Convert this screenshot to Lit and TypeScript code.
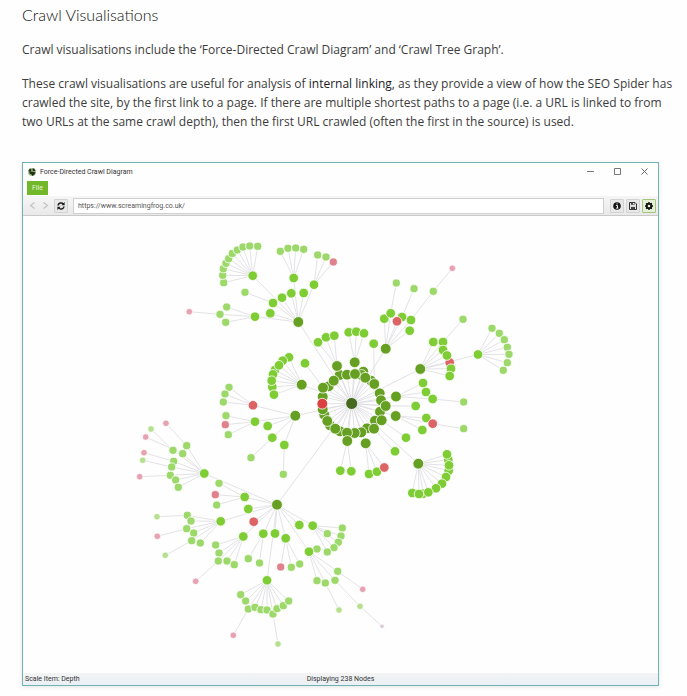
import { LitElement, html, svg, css } from "lit";
import { customElement } from "lit/decorators.js";

interface GraphNode {
  x: number;
  y: number;
  broken: boolean;
  children: GraphNode[];
}

const n = (x: number, y: number, ...children: GraphNode[]): GraphNode => ({ x, y, broken: false, children });
const r = (x: number, y: number, ...children: GraphNode[]): GraphNode => ({ x, y, broken: true, children });
const fan = (...points: [number, number][]): GraphNode[] => points.map(([x, y]) => n(x, y));

const site: GraphNode = n(351.7, 403.5,
  // Ring of pages linked straight from the home page
  ...fan([339.7, 375], [347, 374.7], [363.3, 371.7], [371, 380.7], [379.7, 393.3], [361.5, 375],
    [385.7, 406], [380, 411.7], [367, 428.3], [361.3, 432.3], [354.7, 433], [340, 431.3], [330, 425.3],
    [324.3, 414.7], [322.7, 409.3], [322.7, 396.7], [328.7, 386.3]),
  ...fan([355, 374], [365.3, 377.7], [381, 400.3], [375, 420.7], [347, 432.7], [335.3, 428.7], [327.3, 421], [333.7, 380.7]),
  n(374.3, 384, n(373.7, 343.7)),
  n(323, 387.7, n(305, 363.3)),
  n(374, 428.7, n(395, 451.3)),
  n(381.7, 420.3, n(406, 437.7)),
  n(385.7, 406, n(415.7, 406)),
  r(322.3, 403.7),
  n(337, 366, ...fan([318, 342.3], [326, 337.3], [334.3, 335.7])),
  n(354.7, 362.3, ...fan([348.7, 332.3], [356.3, 331.7], [364, 333.3])),
  n(347.3, 441, ...fan([340.3, 470.7], [351.3, 471.3])),
  n(365.7, 443.3, n(369, 474), n(377, 471.7), r(384.3, 467.5)),
  n(396, 396.5, n(423, 383), n(426, 392), n(432.7, 399, n(463.7, 402))),
  n(395.7, 416, n(426.3, 418), n(422.3, 430), r(432.7, 423.7, n(463.7, 428.7))),
  n(418.3, 463.7, ...fan([448.3, 459.7], [448.7, 470.7], [423.3, 493.7], [447, 454.3], [449, 465.3], [446, 477],
    [442, 483.7], [436, 488.3], [428.3, 492.3], [412.3, 493], [419, 494])),
  n(298.3, 322,
    n(252.7, 275.7, ...fan([223.7, 282.7], [222.7, 275.3], [223.3, 268.7], [226, 263.3], [228.7, 258.7],
      [232.3, 253.5], [237.3, 250], [243, 247], [249.7, 246], [257.7, 246.3])),
    n(293.7, 278, ...fan([280.3, 251.3], [288, 248.3], [295.7, 248], [303.7, 249.3])),
    n(314, 284.7, n(317.7, 255), n(326, 257), r(333.3, 262)),
    n(303.7, 293), n(291.3, 293.3), n(282, 297.7), n(273, 303, n(245, 292.3)), n(270.3, 313.3),
    n(255, 316.7, n(226.7, 307), n(220, 314.3, r(189.3, 311.7)), n(225.7, 322.3))),
  n(385.7, 348.7,
    n(384.3, 318.7), n(390.7, 313.3, n(396.3, 283)), n(402, 317, n(414, 288.7)), r(397, 321.3),
    n(411, 320, n(433.3, 291.3, r(452.3, 268.3))), n(409.7, 330.7)),
  n(420.3, 369,
    n(433.3, 342), n(443, 342, n(463, 319.3)), r(449.7, 362.5), n(443, 350), n(447, 355.5), n(451, 368.7), n(449.7, 376),
    n(478, 354.5, ...fan([492, 328.3], [499.3, 333.3], [504.3, 339.7], [507.3, 347.3], [509, 354.3], [507.3, 362.7], [503.3, 370.3]))),
  n(301.7, 384.7, ...fan([289, 357.3], [282.7, 360.7], [275, 370], [273, 374.3], [279, 365.3], [272.3, 387], [271.7, 380.7], [274, 394.7])),
  n(295.3, 415.7,
    r(253, 405.3, ...fan([229, 387.3], [225, 394], [223.3, 402])),
    n(255, 421.7, n(226, 415.7), r(225.3, 424.7), n(228.3, 434.7)),
    n(267.7, 426), n(272.3, 437.7, n(251, 457.7)), n(284.3, 445, n(283.3, 474.3))),
  n(277, 504.7,
    n(204.3, 473.5,
      n(186.7, 445.7, r(166, 423.3)), n(182.7, 453.7, r(145.7, 437)), n(173, 450.3, n(151, 429)),
      n(173.7, 461.3, r(144, 452.7)), n(171.7, 467, n(142.7, 460.3)), n(170.3, 475.3, r(139.7, 476.7)),
      n(175.7, 480), n(178.3, 487.3)),
    n(244.7, 497, n(219, 483.3), r(215.3, 494.7), n(216.7, 505)),
    n(248.3, 509), r(253.7, 521.7),
    n(220.7, 521.3,
      n(187.3, 515.3, n(157, 516.7)), n(191, 521), n(186.7, 528.7, r(157.3, 536.3)), n(193.7, 533),
      n(191.7, 540.7, n(165.3, 555.3)), n(200.3, 543)),
    n(243.3, 536.5, n(215.7, 545), n(219, 553), n(218.3, 561, r(195.7, 581.3)), n(227, 561), n(234.3, 564.7)),
    n(263.3, 533.7, n(248.3, 558.7), n(259.5, 563)),
    n(275, 533.5),
    n(285.7, 538.3, r(280.7, 567), n(291.3, 567.3), n(299.7, 564)),
    n(267, 580.3,
      n(240.7, 594.7), n(245.7, 601), n(248.3, 609, r(233.3, 635.3)), n(255, 607.3), n(261, 609.7), n(267, 610),
      n(273, 614, n(278, 644)), n(277, 608.7), n(283.3, 605.7), n(288.7, 601)),
    n(299.3, 525),
    n(312.7, 525.7, ...fan([342.3, 528], [327.3, 533.7], [341, 536], [338.3, 542.3], [334, 547.7], [327.3, 552])),
    n(309, 551.7,
      n(317, 549), n(317, 580.7), n(325.3, 583, n(339, 610)), n(335, 580.3, n(360, 606.3, r(382, 626.3))),
      n(337.7, 571.3, r(362.7, 589.3)))));

const RADIUS = [6, 5.4, 4.8, 4.1, 3.3, 2.3];

@customElement("crawl-graph")
export class CrawlGraph extends LitElement {
  static styles = css`
    :host { display: block; background: #fefefe; }
    svg { display: block; width: 100%; height: auto; }
    line { stroke: #dcdae0; stroke-width: 0.8; }
    circle { stroke: #fff; stroke-width: 0.8; }
    .d0 { fill: #456a20; }
    .d1 { fill: #66a023; }
    .d2 { fill: #7fcd35; }
    .d3 { fill: #9dd96a; }
    .d4 { fill: #b6df90; }
    .d5 { fill: #c8dcb8; }
    .broken.d1 { fill: #db4140; }
    .broken.d2 { fill: #dc6464; }
    .broken.d3 { fill: #e0828c; }
    .broken.d4 { fill: #e6a2b0; }
    .broken.d5 { fill: #d9cbd6; }
  `;

  private links(node: GraphNode): unknown {
    return node.children.map((c) => svg`<line x1=${node.x} y1=${node.y} x2=${c.x} y2=${c.y}></line>${this.links(c)}`);
  }

  private dots(node: GraphNode, depth = 0): unknown {
    return svg`${node.children.map((c) => this.dots(c, depth + 1))}
      <circle class="d${depth} ${node.broken ? "broken" : ""}" cx=${node.x} cy=${node.y} r=${RADIUS[depth]}></circle>`;
  }

  render() {
    return html`<svg viewBox="23 216 635 457" role="img" aria-label="Force-directed crawl diagram">
      ${this.links(site)}${this.dots(site)}
    </svg>`;
  }
}

@customElement("crawl-window")
export class CrawlWindow extends LitElement {
  static styles = css`
    :host {
      display: block;
      border: 1px solid #6fb3b4;
      background: #fefefe;
      box-shadow: 0 1px 4px #0000001c;
      font: 7px/10px Roboto, "Open Sans", sans-serif;
      color: #333;
    }
    button { margin: 0; padding: 0; border: 0; background: none; font: inherit; color: inherit; display: grid; place-items: center; }
    svg { display: block; }
    .title { display: flex; align-items: center; height: 17px; padding: 0 8px 0 4px; gap: 3px; }
    .title .name { flex: 1; }
    .controls { display: flex; gap: 16px; }
    .controls button { width: 11px; height: 11px; }
    .menu { padding: 1px 4px; height: 14px; }
    .file { width: 21px; height: 14px; background: #73b72b; color: #e6f6d2; }
    .bar { display: flex; align-items: center; gap: 2px; height: 19px; padding: 0 2px 0 4px; border-bottom: 1px solid #c9c9c9; background: linear-gradient(#f6f6f6, #e9e9e9); }
    .nav { width: 11px; height: 13px; }
    .tool { width: 14px; height: 14px; box-sizing: border-box; border: 1px solid #d2d2d2; border-radius: 1px; background: #e8e8e8; }
    .reload { margin: 0 3px 0 1px; }
    .settings { border-color: #a5c47c; background: #e6efd9; }
    input { flex: 1; min-width: 0; height: 16px; box-sizing: border-box; border: 1px solid #d0d0d0; padding: 0 4px; margin: 0 4px 0 0; font: inherit; color: #555; background: #fff; outline: 0; }
    .status { display: grid; grid-template-columns: 1fr auto 1fr; height: 12px; align-items: center; padding: 0 2px; background: linear-gradient(#f3f3f3, #eaf0f5); }
  `;

  render() {
    return html`
      <div class="title">
        <svg width="10" height="10" viewBox="0 0 10 10">
          <circle cx="5" cy="5" r="4" fill="#a5c48a"></circle>
          <path d="M1.5 3.5L3 1.5l1.5 1L4 4.5 2.5 5zM5.5 1.5h1.5l1.5 2L7 4.5 5.5 3.5zM4.5 4.5L7 5l1.5.5-1 2-2 1.5-1-1.5L3 7l-1-1.5z" fill="#20301c"></path>
        </svg>
        <span class="name">Force-Directed Crawl Diagram</span>
        <div class="controls">
          <button aria-label="Minimise"><svg width="9" height="9" viewBox="0 0 9 9"><path d="M1 4.5h7" stroke="#777"></path></svg></button>
          <button aria-label="Maximise"><svg width="9" height="9" viewBox="0 0 9 9"><path d="M1.5 1.5h6v6h-6z" fill="none" stroke="#777"></path></svg></button>
          <button aria-label="Close"><svg width="9" height="9" viewBox="0 0 9 9"><path d="M1.5 1.5l6 6m0-6l-6 6" stroke="#666"></path></svg></button>
        </div>
      </div>
      <div class="menu"><button class="file">File</button></div>
      <div class="bar">
        <button class="nav" aria-label="Back"><svg width="9" height="9" viewBox="0 0 9 9"><path d="M6.5 1.5l-4 3 4 3" fill="none" stroke="#c2c2c2" stroke-width="1.2"></path></svg></button>
        <button class="nav" aria-label="Forward"><svg width="9" height="9" viewBox="0 0 9 9"><path d="M2.5 1.5l4 3-4 3" fill="none" stroke="#c2c2c2" stroke-width="1.2"></path></svg></button>
        <button class="tool reload" aria-label="Reload"><svg width="10" height="10" viewBox="0 0 10 10">
          <path d="M2 4.5a3 3 0 0 1 5.3-1.4M8 5.5a3 3 0 0 1-5.3 1.4" fill="none" stroke="#1c1c1c" stroke-width="1.5"></path>
          <path d="M8.6 1v3.2H5.4zM1.4 9V5.8h3.2z" fill="#1c1c1c"></path></svg></button>
        <input type="text" aria-label="Address" value="https://www.screamingfrog.co.uk/">
        <button class="tool" aria-label="Information"><svg width="8" height="8" viewBox="0 0 8 8"><circle cx="4" cy="4" r="3.8" fill="#161616"></circle><path d="M3.1 3.5H4.5V6M3 6.1h2.4M3.5 1.9h1.1" fill="none" stroke="#eee" stroke-width="1"></path></svg></button>
        <button class="tool" aria-label="Save"><svg width="8" height="8" viewBox="0 0 8 8"><path d="M.5.5h5.5L7.5 2v5.5h-7z" fill="#ddd" stroke="#333"></path><path d="M2 .5h3.5v2.3H2zM2 5h4v2.5H2z" fill="#444"></path><path d="M4 1h1v1.2H4z" fill="#eee"></path></svg></button>
        <button class="tool settings" aria-label="Settings"><svg width="8" height="8" viewBox="0 0 8 8"><circle cx="4" cy="4" r="2.3" fill="none" stroke="#161616" stroke-width="2"></circle><path d="M4 0v1.5M4 6.5V8M0 4h1.5M6.5 4H8M1.2 1.2l1 1M5.8 5.8l1 1M6.8 1.2l-1 1M2.2 5.8l-1 1" stroke="#161616" stroke-width="1.4"></path></svg></button>
      </div>
      <crawl-graph></crawl-graph>
      <div class="status"><span>Scale Item: Depth</span><span>Displaying 238 Nodes</span></div>
    `;
  }
}

@customElement("app-root")
export class AppRoot extends LitElement {
  static styles = css`
    :host { display: block; padding: 4px 12px 10px 22px; background: #fefefe; color: #3c3c3c; font: 12px/19px "Open Sans", "Noto Sans", sans-serif; }
    h2 { margin: 0; font: 300 16px/22px Lato, "Open Sans", sans-serif; color: #111; }
    p { margin: 14px 0 15px; }
    strong { font-weight: 500; color: #1c1c1c; }
    crawl-window { margin: 31px 16px 0 0; }
  `;

  render() {
    return html`
      <h2>Crawl Visualisations</h2>
      <p>Crawl visualisations include the ‘Force-Directed Crawl Diagram’ and ‘Crawl Tree Graph’.</p>
      <p>These crawl visualisations are useful for analysis of <strong>internal linking</strong>, as they provide a view of how the SEO Spider has crawled the site, by the first link to a page. If there are multiple shortest paths to a page (i.e. a URL is linked to from two URLs at the same crawl depth), then the first URL crawled (often the first in the source) is used.</p>
      <crawl-window></crawl-window>
    `;
  }
}
